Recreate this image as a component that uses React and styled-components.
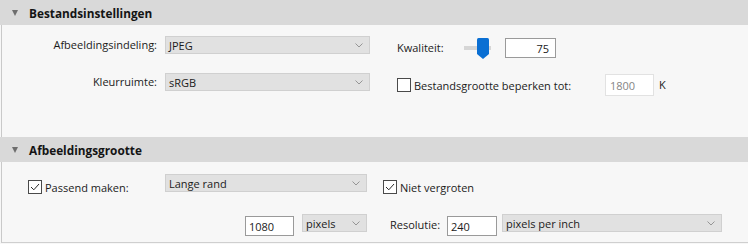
import React from 'react';
import styled, { createGlobalStyle } from 'styled-components';

const GlobalStyle = createGlobalStyle`
    body {
        margin: 0;
        background: #f7f7f7;
        font-family: "Open Sans", "Liberation Sans", sans-serif;
        font-size: 11px;
        color: #1b1b1b;
    }
`;

const Panel = styled.div`
    width: 748px;
    height: 244px;
    background: #f7f7f7;
    overflow: hidden;
`;

const Header = styled.div`
    height: 25px;
    display: flex;
    align-items: center;
    background: #d9d9d9;
    font-weight: 700;
    font-size: 11.8px;
    color: #141414;
`;

const Triangle = styled.span`
    width: 0;
    height: 0;
    margin: 1px 11px 0 12px;
    border-left: 3.5px solid transparent;
    border-right: 3.5px solid transparent;
    border-top: 6px solid #6e6e6e;
`;

const Body = styled.div`
    height: ${(p) => p.$h}px;
    margin-left: 1px;
    border-left: 1px solid #c9c9c9;
    border-bottom: ${(p) => (p.$last ? '1px solid #cfcfcf' : 'none')};
    padding-top: ${(p) => p.$pt}px;
    display: flex;
    flex-direction: column;
    gap: ${(p) => p.$gap}px;
    box-sizing: border-box;
`;

const Row = styled.div`
    display: flex;
    align-items: flex-start;
    padding-left: ${(p) => p.$pl || 0}px;
`;

const Label = styled.div`
    width: ${(p) => p.$w}px;
    margin-right: ${(p) => p.$mr || 0}px;
    margin-left: ${(p) => p.$ml || 0}px;
    margin-top: ${(p) => p.$mt || 0}px;
    height: 18px;
    line-height: 18px;
    text-align: ${(p) => p.$align || 'left'};
    white-space: nowrap;
    flex-shrink: 0;
`;

const Select = styled.div`
    width: ${(p) => p.$w}px;
    height: 18px;
    margin-left: ${(p) => p.$ml || 0}px;
    margin-top: ${(p) => p.$mt || 0}px;
    box-sizing: border-box;
    background: #e1e1e1;
    border: 1px solid #d0d0d0;
    display: flex;
    align-items: center;
    justify-content: space-between;
    padding: 0 6px 0 3px;
    flex-shrink: 0;
    white-space: nowrap;
`;

const Chevron = () => (
    <svg width="8" height="5" viewBox="0 0 8 5">
        <path d="M0.5 0.5 L4 4 L7.5 0.5" fill="none" stroke="#8c8c8c" strokeWidth="0.9" />
    </svg>
);

const Group = styled.div`
    display: flex;
    align-items: center;
    height: 22px;
    margin-left: ${(p) => p.$ml || 0}px;
    margin-top: ${(p) => p.$mt || 0}px;
    width: ${(p) => (p.$w ? `${p.$w}px` : 'auto')};
    flex-shrink: 0;
`;

const Input = styled.div`
    width: ${(p) => p.$w}px;
    height: ${(p) => p.$h || 20}px;
    margin-left: ${(p) => p.$ml || 0}px;
    margin-top: ${(p) => p.$mt || 0}px;
    box-sizing: border-box;
    background: #fff;
    border: 1px solid ${(p) => (p.$disabled ? '#e2e2e2' : '#9a9a9a')};
    color: ${(p) => (p.$disabled ? '#858585' : '#1b1b1b')};
    display: flex;
    align-items: center;
    justify-content: ${(p) => (p.$right ? 'flex-end' : 'flex-start')};
    padding: 0 ${(p) => (p.$right ? 6 : 2)}px 0 ${(p) => (p.$right ? 0 : p.$disabled ? 4 : 3)}px;
    flex-shrink: 0;
`;

const Box = styled.span`
    width: 14px;
    height: 14px;
    box-sizing: border-box;
    border: 1px solid #4a4a4a;
    background: #fff;
    margin-right: ${(p) => p.$gap || 3}px;
    display: flex;
    align-items: center;
    justify-content: center;
    flex-shrink: 0;
`;

const CheckBox = ({ checked, gap }) => (
    <Box $gap={gap}>
        {checked && (
            <svg width="10" height="8" viewBox="0 0 10 8">
                <path d="M1 4 L3.8 6.8 L9 1" fill="none" stroke="#2a2a2a" strokeWidth="1" />
            </svg>
        )}
    </Box>
);

const Slider = () => (
    <svg width="28" height="21" viewBox="0 0 28 21">
        <rect x="0" y="8" width="27" height="4" fill="#d6d6d6" />
        <path d="M13 1.5 Q13 0 14.5 0 L23.5 0 Q25 0 25 1.5 L25 16 L19 21 L13 16 Z" fill="#0a6fd3" />
    </svg>
);

export default function App() {
    return (
        <Panel>
            <GlobalStyle />
            <Header><Triangle />Bestandsinstellingen</Header>
            <Body $h={112} $pt={11} $gap={14}>
                <Row>
                    <Label $w={155} $mr={8} $align="right">Afbeeldingsindeling:</Label>
                    <Select $w={205}>JPEG<Chevron /></Select>
                    <Group $ml={27} $mt={1}>
                        <Label $w={67}>Kwaliteit:</Label>
                        <Slider />
                        <Input $w={51} $ml={13} $right>75</Input>
                    </Group>
                </Row>
                <Row>
                    <Label $w={155} $mr={8} $align="right">Kleurruimte:</Label>
                    <Select $w={205}>sRGB<Chevron /></Select>
                    <Group $ml={27} $mt={1} $w={208}>
                        <CheckBox />
                        Bestandsgrootte beperken tot:
                    </Group>
                    <Input $w={49} $h={22} $mt={1} $disabled>1800</Input>
                    <Label $w={20} $ml={5} $mt={3}>K</Label>
                </Row>
            </Body>
            <Header><Triangle />Afbeeldingsgrootte</Header>
            <Body $h={81} $pt={12} $gap={16} $last>
                <Row $pl={26}>
                    <Group $w={137} $mt={2}>
                        <CheckBox checked />
                        Passend maken:
                    </Group>
                    <Select $w={202}>Lange rand<Chevron /></Select>
                    <Group $ml={16} $mt={2}>
                        <CheckBox checked />
                        Niet vergroten
                    </Group>
                </Row>
                <Row $pl={243}>
                    <Input $w={49} $mt={2}>1080</Input>
                    <Select $w={65} $ml={8}>pixels<Chevron /></Select>
                    <Label $w={57} $ml={23} $mt={2}>Resolutie:</Label>
                    <Input $w={50} $mt={2}>240</Input>
                    <Select $w={220} $ml={5}>pixels per inch<Chevron /></Select>
                </Row>
            </Body>
        </Panel>
    );
}
